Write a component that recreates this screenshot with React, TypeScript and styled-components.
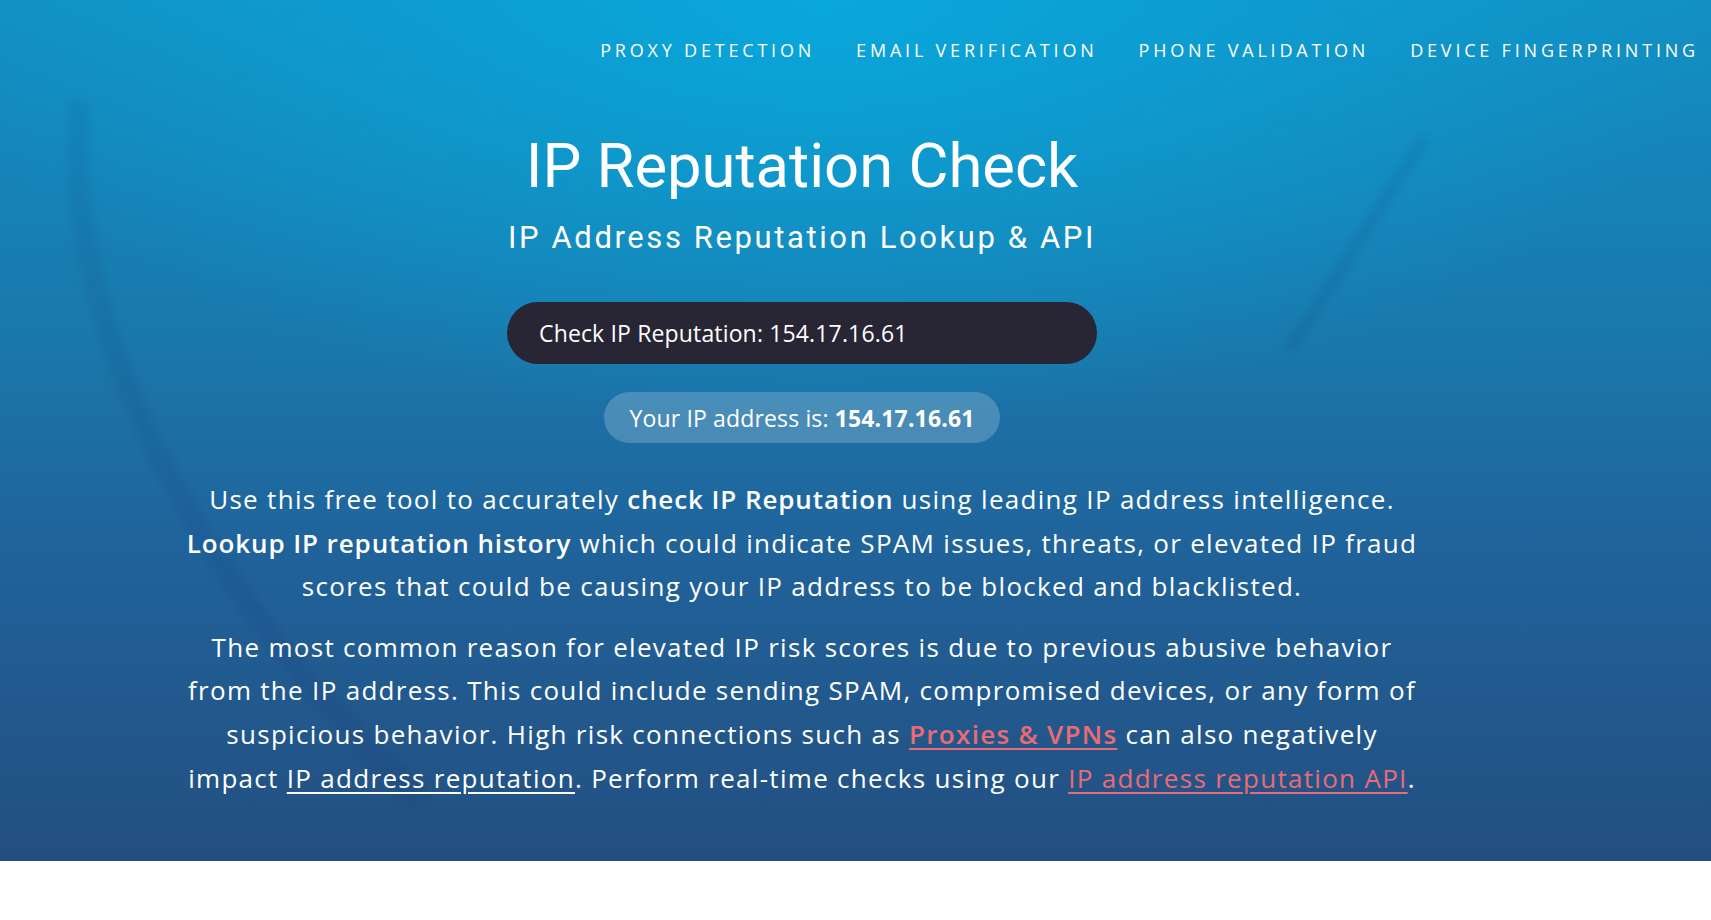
import React from "react";
import styled, { createGlobalStyle } from "styled-components";

const GlobalStyle = createGlobalStyle`
  html, body {
    margin: 0;
    padding: 0;
    background: #ffffff;
  }
  body {
    font-family: "Open Sans", "DejaVu Sans", sans-serif;
  }
`;

const navItems = [
  "Proxy Detection",
  "Email Verification",
  "Phone Validation",
  "Device Fingerprinting",
];

const IP = "154.17.16.61";

const App = () => {
  return (
    <>
      <GlobalStyle />
      <Hero>
        <Feathers viewBox="0 0 1711 861" preserveAspectRatio="none" aria-hidden>
          <defs>
            <filter id="soft">
              <feGaussianBlur stdDeviation="4" />
            </filter>
          </defs>
          <path
            d="M80 100 C 60 300, 170 560, 420 800"
            stroke="rgba(10,40,80,0.06)"
            strokeWidth="22"
            fill="none"
            filter="url(#soft)"
          />
          <path
            d="M1422 142 C 1385 200, 1335 280, 1292 345"
            stroke="rgba(10,40,80,0.08)"
            strokeWidth="12"
            fill="none"
            strokeLinecap="round"
            filter="url(#soft)"
          />
        </Feathers>
        <Nav>
          {navItems.map((item) => (
            <NavLink key={item} href="#">
              {item}
            </NavLink>
          ))}
        </Nav>
        <Content>
          <Title>IP Reputation Check</Title>
          <Subtitle>IP Address Reputation Lookup &amp; API</Subtitle>
          <CheckButton type="button">Check IP Reputation: {IP}</CheckButton>
          <IpPill>
            Your IP address is: <strong>{IP}</strong>
          </IpPill>
          <Copy>
            Use this free tool to accurately <strong>check IP Reputation</strong> using
            leading IP address intelligence.
            <br />
            <strong>Lookup IP reputation history</strong> which could indicate SPAM
            issues, threats, or elevated IP fraud
            <br />
            scores that could be causing your IP address to be blocked and blacklisted.
          </Copy>
          <Copy>
            The most common reason for elevated IP risk scores is due to previous abusive
            behavior
            <br />
            from the IP address. This could include sending SPAM, compromised devices, or
            any form of
            <br />
            suspicious behavior. High risk connections such as{" "}
            <TextLink href="#" $accent $bold>
              Proxies &amp; VPNs
            </TextLink>{" "}
            can also negatively
            <br />
            impact <TextLink href="#">IP address reputation</TextLink>. Perform
            real-time checks using our{" "}
            <TextLink href="#" $accent>
              IP address reputation API
            </TextLink>
            .
          </Copy>
        </Content>
      </Hero>
      <Below />
    </>
  );
};

export default App;

const Hero = styled.section`
  position: relative;
  overflow: hidden;
  height: 861px;
  box-sizing: border-box;
  color: #ffffff;
  background:
    radial-gradient(ellipse 900px 420px at 48% 0%, rgba(8, 170, 222, 0.9) 0%, rgba(8, 170, 222, 0) 100%),
    linear-gradient(180deg, #1290c4 0%, #1a77ab 40%, #20629a 65%, #234f80 100%);
`;

const Feathers = styled.svg`
  position: absolute;
  inset: 0;
  width: 100%;
  height: 100%;
  pointer-events: none;
`;

const Nav = styled.nav`
  position: relative;
  display: flex;
  justify-content: flex-end;
  align-items: center;
  gap: 41px;
  height: 50px;
  padding: 25px 12px 0 0;
`;

const NavLink = styled.a`
  font-family: "Open Sans", sans-serif;
  font-size: 18px;
  font-weight: 500;
  letter-spacing: 3.8px;
  text-transform: uppercase;
  color: #ffffff;
  text-decoration: none;
  line-height: 1;
`;

const Content = styled.div`
  position: relative;
  width: 1604px;
  display: flex;
  flex-direction: column;
  align-items: center;
  text-align: center;
  padding-top: 53px;
`;

const Title = styled.h1`
  margin: 0;
  font-family: Roboto, sans-serif;
  font-weight: 400;
  font-size: 61.5px;
  line-height: 76px;
`;

const Subtitle = styled.h2`
  margin: 14px 0 0;
  font-family: Roboto, sans-serif;
  font-weight: 400;
  font-size: 31px;
  letter-spacing: 2.6px;
  line-height: 40px;
`;

const CheckButton = styled.button`
  margin-top: 44px;
  width: 590px;
  height: 62px;
  border: none;
  border-radius: 31px;
  background: #282635;
  color: #ffffff;
  font-family: "Open Sans", sans-serif;
  font-size: 23px;
  text-align: left;
  padding: 0 0 0 32px;
  letter-spacing: 0.15px;
  cursor: pointer;
`;

const IpPill = styled.div`
  margin-top: 28px;
  height: 51px;
  padding: 0 25px;
  display: flex;
  align-items: center;
  border-radius: 26px;
  background: rgba(255, 255, 255, 0.2);
  font-size: 23px;
  letter-spacing: 0.15px;

  strong {
    font-weight: 700;
    margin-left: 6px;
  }
`;

const Copy = styled.p`
  margin: 0;
  font-size: 26px;
  letter-spacing: 1.3px;
  line-height: 43.6px;
  &:first-of-type {
    margin-top: 35px;
  }
  & + & {
    margin-top: 17px;
  }

  strong {
    font-weight: 600;
    letter-spacing: 0.9px;
  }
`;

const TextLink = styled.a<{ $accent?: boolean; $bold?: boolean }>`
  color: ${(p) => (p.$accent ? "#ea6a75" : "#ffffff")};
  font-weight: ${(p) => (p.$bold ? 600 : 400)};
  text-decoration: underline;
  text-underline-offset: 4px;
`;

const Below = styled.div`
  height: 59px;
  background: #ffffff;
`;
